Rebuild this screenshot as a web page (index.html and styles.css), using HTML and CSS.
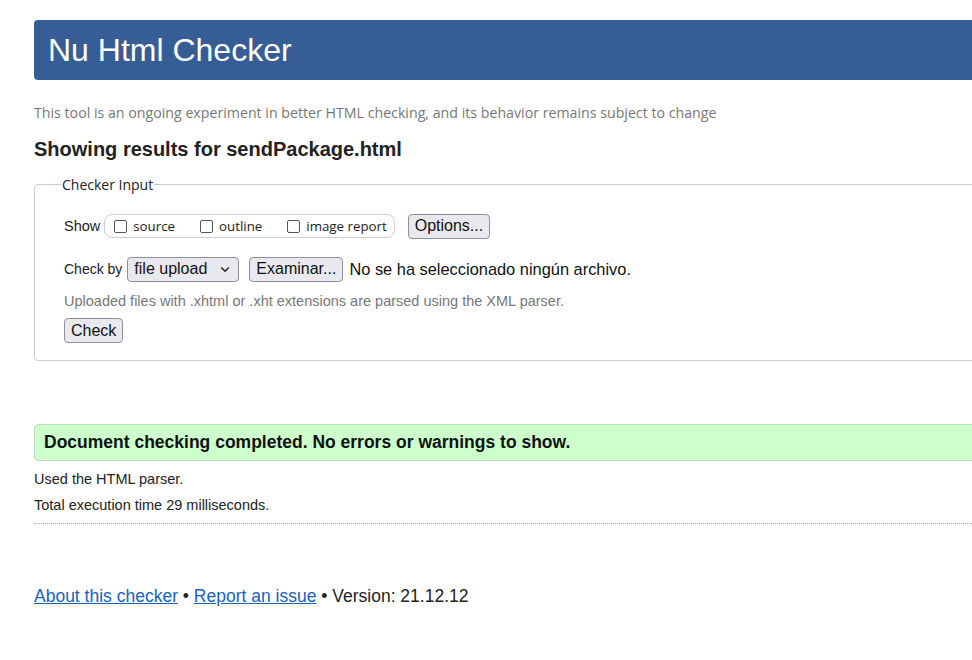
FILE: index.html
```html
<!DOCTYPE html>
<html lang="en">
<head>
<meta charset="utf-8">
<title>Nu Html Checker</title>
<link rel="stylesheet" href="styles.css">
</head>
<body>
<div class="page">
  <h1 class="banner">Nu Html Checker</h1>
  <p class="tagline">This tool is an ongoing experiment in better HTML checking, and its behavior remains subject to change</p>
  <h2 class="results-title">Showing results for sendPackage.html</h2>

  <fieldset class="input-box">
    <legend class="legend">Checker Input</legend>
    <div class="row">
      <span class="label">Show</span>
      <span class="pill">
        <label class="opt"><span class="cb"></span>source</label>
        <label class="opt"><span class="cb"></span>outline</label>
        <label class="opt"><span class="cb"></span>image report</label>
      </span>
      <span class="btn btn-options">Options...</span>
    </div>
    <div class="row row-check">
      <span class="label label-by">Check by</span>
      <span class="select">file upload
        <svg class="chev" width="10" height="7" viewBox="0 0 10 7"><path d="M1.2 1.5 L5 5.2 L8.8 1.5" fill="none" stroke="#222" stroke-width="1.5"/></svg>
      </span>
      <span class="btn btn-browse">Examinar...</span>
      <span class="nofile">No se ha seleccionado ningún archivo.</span>
    </div>
    <p class="note">Uploaded files with .xhtml or .xht extensions are parsed using the XML parser.</p>
    <span class="btn btn-check">Check</span>
  </fieldset>

  <p class="success">Document checking completed. No errors or warnings to show.</p>
  <p class="info">Used the HTML parser.</p>
  <p class="info">Total execution time 29 milliseconds.</p>
  <hr class="sep">

  <p class="footer"><a href="#">About this checker</a> • <a href="#">Report an issue</a> • Version: 21.12.12</p>
</div>
</body>
</html>
```
FILE: styles.css
```css
html, body {
  margin: 0;
  padding: 0;
  overflow: hidden;
  background: #fff;
}
body {
  font-family: "Liberation Sans", Arial, sans-serif;
  color: #222;
}
.page {
  width: 1100px;
  padding: 20px 0 0 34px;
}
.banner {
  margin: 0;
  height: 60px;
  box-sizing: border-box;
  background: #365d95;
  color: #fff;
  border-radius: 4px;
  font-weight: normal;
  font-size: 32px;
  line-height: 60px;
  padding-left: 14px;
}
.tagline {
  margin: 24px 0 0;
  font-family: "Open Sans", "Noto Sans", sans-serif;
  font-size: 14.2px;
  color: #777;
  line-height: 18px;
}
.results-title {
  margin: 15px 0 0;
  font-size: 20px;
  line-height: 24px;
  font-weight: bold;
  color: #222;
}
.input-box {
  margin: 14px 0 0;
  border: 1px solid #ccc;
  border-radius: 4px;
  padding: 19px 29px 17px;
}
.legend {
  font-family: "Open Sans", "Noto Sans", sans-serif;
  font-size: 14px;
  color: #222;
  padding: 0 1px;
  margin-left: -3px;
}
.row {
  display: flex;
  align-items: center;
  height: 26px;
}
.row-check {
  margin-top: 17px;
}
.label {
  font-size: 14.5px;
  margin-right: 4px;
}
.label-by {
  font-size: 14px;
  margin-right: 5px;
}
.pill {
  display: inline-flex;
  align-items: center;
  height: 22px;
  border: 1px solid #ccc;
  border-radius: 8px;
  padding: 0 7px 0 9px;
  margin-right: 13px;
}
.opt {
  display: inline-flex;
  align-items: center;
  font-family: "Open Sans", "Noto Sans", sans-serif;
  font-size: 13.3px;
  color: #222;
  margin-right: 25px;
}
.opt:last-child {
  margin-right: 0;
}
.cb {
  width: 13px;
  height: 13px;
  box-sizing: border-box;
  border: 1px solid #555;
  border-radius: 2px;
  margin-right: 6px;
  background: #fff;
}
.btn {
  display: inline-flex;
  align-items: center;
  box-sizing: border-box;
  height: 25px;
  padding: 0 6px;
  background: #e9e9ed;
  border: 1px solid #8f8f9d;
  border-radius: 4px;
  font-size: 16px;
  color: #111;
}
.select {
  display: inline-flex;
  align-items: center;
  box-sizing: border-box;
  height: 25px;
  width: 112px;
  padding: 0 6px;
  background: #e9e9ed;
  border: 1px solid #8f8f9d;
  border-radius: 4px;
  font-size: 16px;
  color: #111;
  margin-right: 10px;
}
.chev {
  margin-left: auto;
  margin-right: 2px;
}
.btn-browse {
  margin-right: 6px;
}
.nofile {
  font-size: 16.4px;
  color: #111;
}
.note {
  margin: 10px 0 8px;
  font-size: 14.5px;
  color: #777;
  line-height: 18px;
}
.btn-check {
  height: 25px;
}
.success {
  margin: 63px 0 0;
  height: 37px;
  box-sizing: border-box;
  background: #ccffcc;
  border: 1px solid #bbddbb;
  border-radius: 4px;
  font-size: 17.5px;
  font-weight: bold;
  color: #111;
  line-height: 35px;
  padding-left: 9px;
}
.info {
  margin: 9px 0 0;
  font-size: 14.5px;
  line-height: 18px;
  color: #222;
}
.info + .info {
  margin-top: 8px;
}
.sep {
  margin: 9px 0 0;
  border: 0;
  border-top: 1px dotted #aaa;
  height: 0;
}
.footer {
  margin: 61px 0 0;
  font-size: 17.5px;
  line-height: 22px;
  color: #222;
}
.footer a {
  color: #1a62b8;
  text-decoration: underline;
}
```
